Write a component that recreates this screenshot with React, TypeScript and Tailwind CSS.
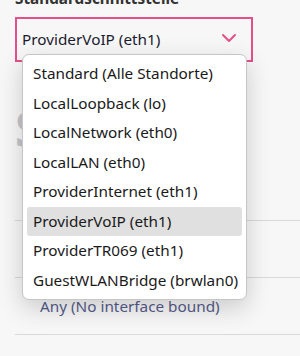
import { ChevronDown } from "lucide-react";

const options = [
  "Standard (Alle Standorte)",
  "LocalLoopback (lo)",
  "LocalNetwork (eth0)",
  "LocalLAN (eth0)",
  "ProviderInternet (eth1)",
  "ProviderVoIP (eth1)",
  "ProviderTR069 (eth1)",
  "GuestWLANBridge (brwlan0)",
];

export default function App() {
  return (
    <div
      className="relative h-[356px] w-[300px] overflow-hidden bg-[#f7f7f7] pl-[15px] text-[15.3px] text-[#222]"
      style={{ fontFamily: '"Noto Sans", "Open Sans", sans-serif' }}
    >
      <div className="-mt-[14px] h-[24px] whitespace-nowrap text-[15.3px] font-bold leading-[24px] text-[#333]">
        Standardschnittstelle
      </div>

      <div className="mt-[7px] flex h-[45px] w-[238px] items-center justify-between border-2 border-[#e5508a] bg-[#f7f7f7] pl-[5px] pr-[10px]">
        <span className="whitespace-nowrap text-[#1c1c30]">ProviderVoIP (eth1)</span>
        <ChevronDown className="mt-[-4px] h-6 w-6 text-[#e5508a]" strokeWidth={2} />
      </div>

      <div className="mt-[42px] h-[50px] text-[48px] font-bold leading-[50px] text-[#c4c6cc]">
        S
      </div>

      <div className="mt-[66px] border-t border-[#d9d9d9]" />
      <div className="h-[56px]" />
      <div className="border-t border-[#d9d9d9]" />
      <div className="flex h-[56px] items-center pl-[25px] text-[#565c8c]">
        Any (No interface bound)
      </div>
      <div className="border-t border-[#d9d9d9]" />

      <ul className="absolute left-[22px] top-[54px] w-[225px] rounded-[7px] border border-[#c6c6c6] bg-white px-[4px] py-[4px] shadow-[0_8px_24px_rgba(0,0,0,0.18)]">
        {options.map((opt) => (
          <li
            key={opt}
            className={`flex h-[29.5px] items-center whitespace-nowrap rounded-[3px] pl-[6px] text-[#1a1a1a] ${
              opt === "ProviderVoIP (eth1)" ? "bg-[#e0e0e0]" : ""
            }`}
          >
            {opt}
          </li>
        ))}
      </ul>
    </div>
  );
}
